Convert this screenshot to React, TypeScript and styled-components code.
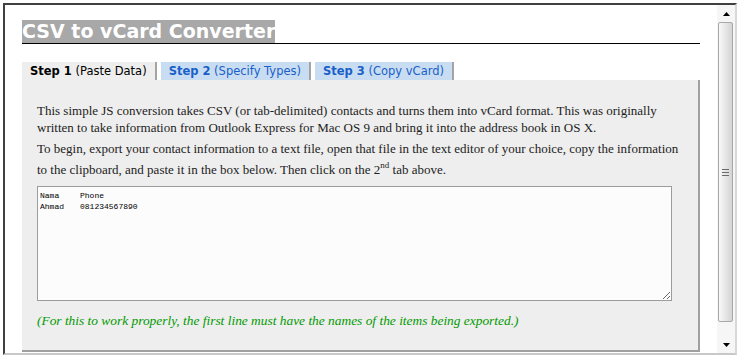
import React from 'react';
import styled, { createGlobalStyle } from 'styled-components';

const GlobalStyle = createGlobalStyle`
    html, body {
        margin: 0;
        padding: 0;
        background: #ffffff;
    }
`;

const Page = styled.div`
    width: 741px;
    height: 361px;
    box-sizing: border-box;
    padding: 3px 4px 6px 3px;
`;

const Window = styled.div`
    display: flex;
    height: 100%;
    box-sizing: border-box;
    border-top: 2px solid #404040;
    border-left: 2px solid #404040;
    border-right: 2px solid #d8d8d8;
    border-bottom: 2px solid #c8c8c8;
`;

const Content = styled.div`
    flex: 1;
    overflow: hidden;
    padding: 15px 17px 0 17px;
    background: #ffffff;
`;

const Header = styled.div`
    border-bottom: 1px solid #000000;
    margin-bottom: 18px;
    line-height: 0;
`;

const Title = styled.h1`
    display: inline-block;
    margin: 0;
    background: #a8a8a8;
    color: #ffffff;
    font-family: "DejaVu Sans", Verdana, sans-serif;
    font-weight: bold;
    font-size: 19px;
    line-height: 23px;
    height: 23px;
`;

const Tabs = styled.div`
    display: flex;
    align-items: flex-end;
`;

const Tab = styled.div<{ $active?: boolean }>`
    height: 18px;
    line-height: 18px;
    padding: 0 8px;
    margin-right: 4px;
    border-right: 2px solid #a4a4a4;
    font-family: "DejaVu Sans", Verdana, sans-serif;
    font-size: 11.5px;
    white-space: nowrap;
    background: ${(p) => (p.$active ? '#eeeeee' : '#c8ddf2')};
    color: ${(p) => (p.$active ? '#000000' : '#1a5fc8')};

    b {
        font-weight: bold;
    }
`;

const Panel = styled.div`
    box-sizing: border-box;
    height: 272px;
    background: #eeeeee;
    border-right: 2px solid #a0a0a0;
    border-bottom: 2px solid #a0a0a0;
    padding: 22px 8px 0 15px;
`;

const Para = styled.p`
    margin: 0 0 4px 0;
    font-family: "Liberation Serif", "Times New Roman", serif;
    font-size: 13px;
    line-height: 17px;
    color: #222222;

    sup {
        font-size: 9px;
        vertical-align: 6px;
    }
`;

const DataBox = styled.textarea`
    display: block;
    box-sizing: border-box;
    width: 635px;
    height: 115px;
    margin-top: 8px;
    padding: 3px 2px;
    border: 1px solid #9c9c9c;
    background: #fcfcfc;
    font-family: "Liberation Mono", "Courier New", monospace;
    font-size: 8px;
    line-height: 11px;
    color: #000000;
    tab-size: 40px;
    outline: none;
`;

const Note = styled.p`
    margin: 11px 0 0 0;
    font-family: "Liberation Serif", "Times New Roman", serif;
    font-style: italic;
    font-size: 13.4px;
    line-height: 17px;
    color: #009a00;
`;

const ScrollBar = styled.div`
    width: 18px;
    display: flex;
    flex-direction: column;
    background: #f6f6f6;
`;

const ArrowButton = styled.div`
    height: 17px;
    display: flex;
    align-items: center;
    justify-content: center;
`;

const Thumb = styled.div`
    flex: 1;
    margin: 0 2px 0 1px;
    border: 1px solid #a8a8a8;
    border-radius: 2px;
    background: linear-gradient(to right, #f8f8f8, #e6e6e6 50%, #d4d4d4);
    display: flex;
    align-items: center;
    justify-content: center;
`;

const TrackGap = styled.div`
    height: 14px;
`;

const Arrow: React.FC<{ up?: boolean }> = ({ up }) => (
    <svg width="7" height="4" viewBox="0 0 7 4">
        <path d={up ? 'M3.5 0 L7 4 L0 4 Z' : 'M0 0 L7 0 L3.5 4 Z'} fill="#000" />
    </svg>
);

const Grip = () => (
    <svg width="7" height="7" viewBox="0 0 7 7">
        <path d="M0 0.5 H7 M0 3.5 H7 M0 6.5 H7" stroke="#6a6a6a" strokeWidth="1" />
    </svg>
);

export default function App() {
    return (
        <Page>
            <GlobalStyle />
            <Window>
                <Content>
                    <Header>
                        <Title>CSV to vCard Converter</Title>
                    </Header>
                    <Tabs>
                        <Tab $active>
                            <b>Step 1</b> (Paste Data)
                        </Tab>
                        <Tab>
                            <b>Step 2</b> (Specify Types)
                        </Tab>
                        <Tab>
                            <b>Step 3</b> (Copy vCard)
                        </Tab>
                    </Tabs>
                    <Panel>
                        <Para>
                            This simple JS conversion takes CSV (or tab-delimited) contacts and turns them into vCard format. This was originally
                            written to take information from Outlook Express for Mac OS 9 and bring it into the address book in OS X.
                        </Para>
                        <Para>
                            To begin, export your contact information to a text file, open that file in the text editor of your choice, copy the information
                            to the clipboard, and paste it in the box below. Then click on the 2<sup>nd</sup> tab above.
                        </Para>
                        <DataBox defaultValue={'Nama\tPhone\nAhmad\t081234567890'} spellCheck={false} />
                        <Note>
                            (For this to work properly, the first line must have the names of the items being exported.)
                        </Note>
                    </Panel>
                </Content>
                <ScrollBar>
                    <ArrowButton>
                        <Arrow up />
                    </ArrowButton>
                    <Thumb>
                        <Grip />
                    </Thumb>
                    <TrackGap />
                    <ArrowButton>
                        <Arrow />
                    </ArrowButton>
                </ScrollBar>
            </Window>
        </Page>
    );
}
